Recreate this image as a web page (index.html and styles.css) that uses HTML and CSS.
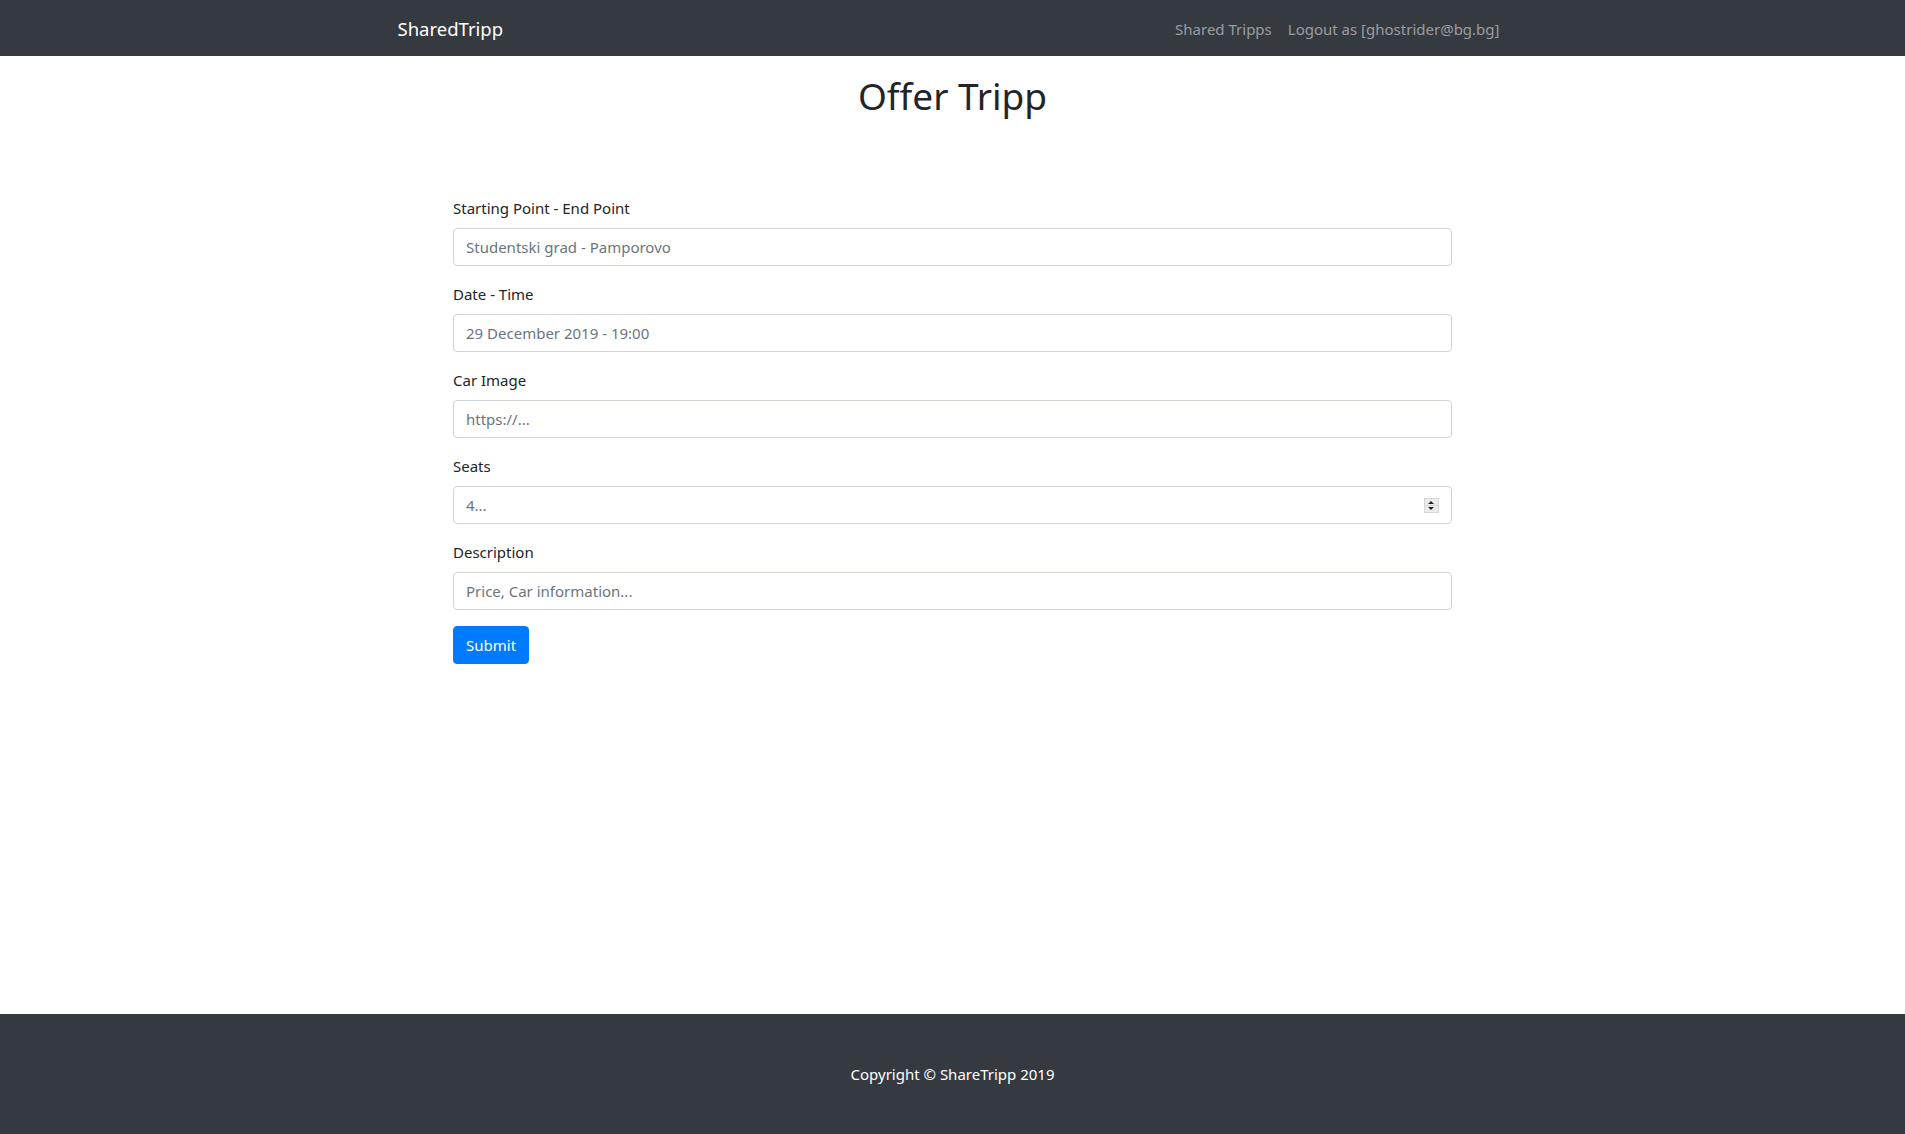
FILE: index.html
```html
<!DOCTYPE html>
<html lang="en">
<head>
<meta charset="utf-8">
<title>Offer Tripp</title>
<link rel="stylesheet" href="styles.css">
</head>
<body>
<nav class="navbar">
  <div class="container nav-inner">
    <a class="brand" href="#">SharedTripp</a>
    <div class="nav-links">
      <a class="nav-link" href="#">Shared Tripps</a>
      <a class="nav-link" href="#">Logout as [ghostrider@bg.bg]</a>
    </div>
  </div>
</nav>
<main class="main">
  <h1 class="title">Offer Tripp</h1>
  <form class="trip-form">
    <div class="form-group">
      <label class="form-label">Starting Point - End Point</label>
      <input class="form-control" type="text" placeholder="Studentski grad - Pamporovo">
    </div>
    <div class="form-group">
      <label class="form-label">Date - Time</label>
      <input class="form-control" type="text" placeholder="29 December 2019 - 19:00">
    </div>
    <div class="form-group">
      <label class="form-label">Car Image</label>
      <input class="form-control" type="text" placeholder="https://...">
    </div>
    <div class="form-group">
      <label class="form-label">Seats</label>
      <div class="number-wrap">
        <input class="form-control" type="text" placeholder="4...">
        <span class="spinner">
          <span class="spin-up"></span>
          <span class="spin-down"></span>
        </span>
      </div>
    </div>
    <div class="form-group">
      <label class="form-label">Description</label>
      <input class="form-control" type="text" placeholder="Price, Car information...">
    </div>
    <button class="btn-primary" type="button">Submit</button>
  </form>
</main>
<footer class="footer">
  <p class="copy">Copyright © ShareTripp 2019</p>
</footer>
</body>
</html>
```

FILE: styles.css
```css
* { box-sizing: border-box; }
html, body { margin: 0; padding: 0; }
body {
  font-family: "Noto Sans", "Open Sans", sans-serif;
  font-size: 15px;
  line-height: 24px;
  color: #212529;
  background: #fff;
  height: 100vh;
  display: flex;
  flex-direction: column;
}
.navbar {
  background: #343a40;
  height: 56px;
  flex: none;
}
.container {
  width: 1140px;
  margin: 0 auto;
  padding: 0 15px;
}
.nav-inner {
  height: 100%;
  padding-top: 2px;
  display: flex;
  align-items: center;
  justify-content: space-between;
}
.brand {
  color: #fff;
  font-size: 18.5px;
  text-decoration: none;
  line-height: 30px;
}
.nav-links { display: flex; }
.nav-link {
  color: rgba(255,255,255,.5);
  text-decoration: none;
  padding: 8px;
}
.main { flex: 1; }
.title {
  margin: 16px 0 0;
  font-size: 37px;
  font-weight: 400;
  line-height: 48px;
  text-align: center;
}
.trip-form {
  width: 999px;
  margin: 76px auto 0;
}
.form-group { margin-bottom: 16px; }
.form-label {
  display: block;
  margin-bottom: 8px;
  line-height: 24px;
}
.form-control {
  display: block;
  width: 100%;
  height: 38px;
  padding: 6px 12px;
  font: inherit;
  color: #495057;
  border: 1px solid #ced4da;
  border-radius: 4px;
  background: #fff;
}
.form-control::placeholder { color: #6c757d; opacity: 1; }
.number-wrap { position: relative; }
.spinner {
  position: absolute;
  right: 13px;
  top: 12px;
  width: 15px;
  height: 15px;
  display: flex;
  flex-direction: column;
  background: #ececec;
  border: 1px solid #d6d6d6;
}
.spin-up, .spin-down {
  flex: 1;
  position: relative;
}
.spin-up { border-bottom: 1px solid #d6d6d6; }
.spin-up::after, .spin-down::after {
  content: "";
  position: absolute;
  left: 3px;
  width: 0;
  height: 0;
  border-left: 3.5px solid transparent;
  border-right: 3.5px solid transparent;
}
.spin-up::after { top: 2px; border-bottom: 3px solid #222; }
.spin-down::after { top: 1px; border-top: 3px solid #222; }
.btn-primary {
  font: inherit;
  color: #fff;
  background: #007bff;
  border: 1px solid #007bff;
  border-radius: 4px;
  padding: 6px 12px;
  height: 38px;
  line-height: 24px;
}
.footer {
  background: #343a40;
  height: 120px;
  flex: none;
  display: flex;
  align-items: center;
  justify-content: center;
}
.copy {
  margin: 0;
  color: #fff;
}
```
